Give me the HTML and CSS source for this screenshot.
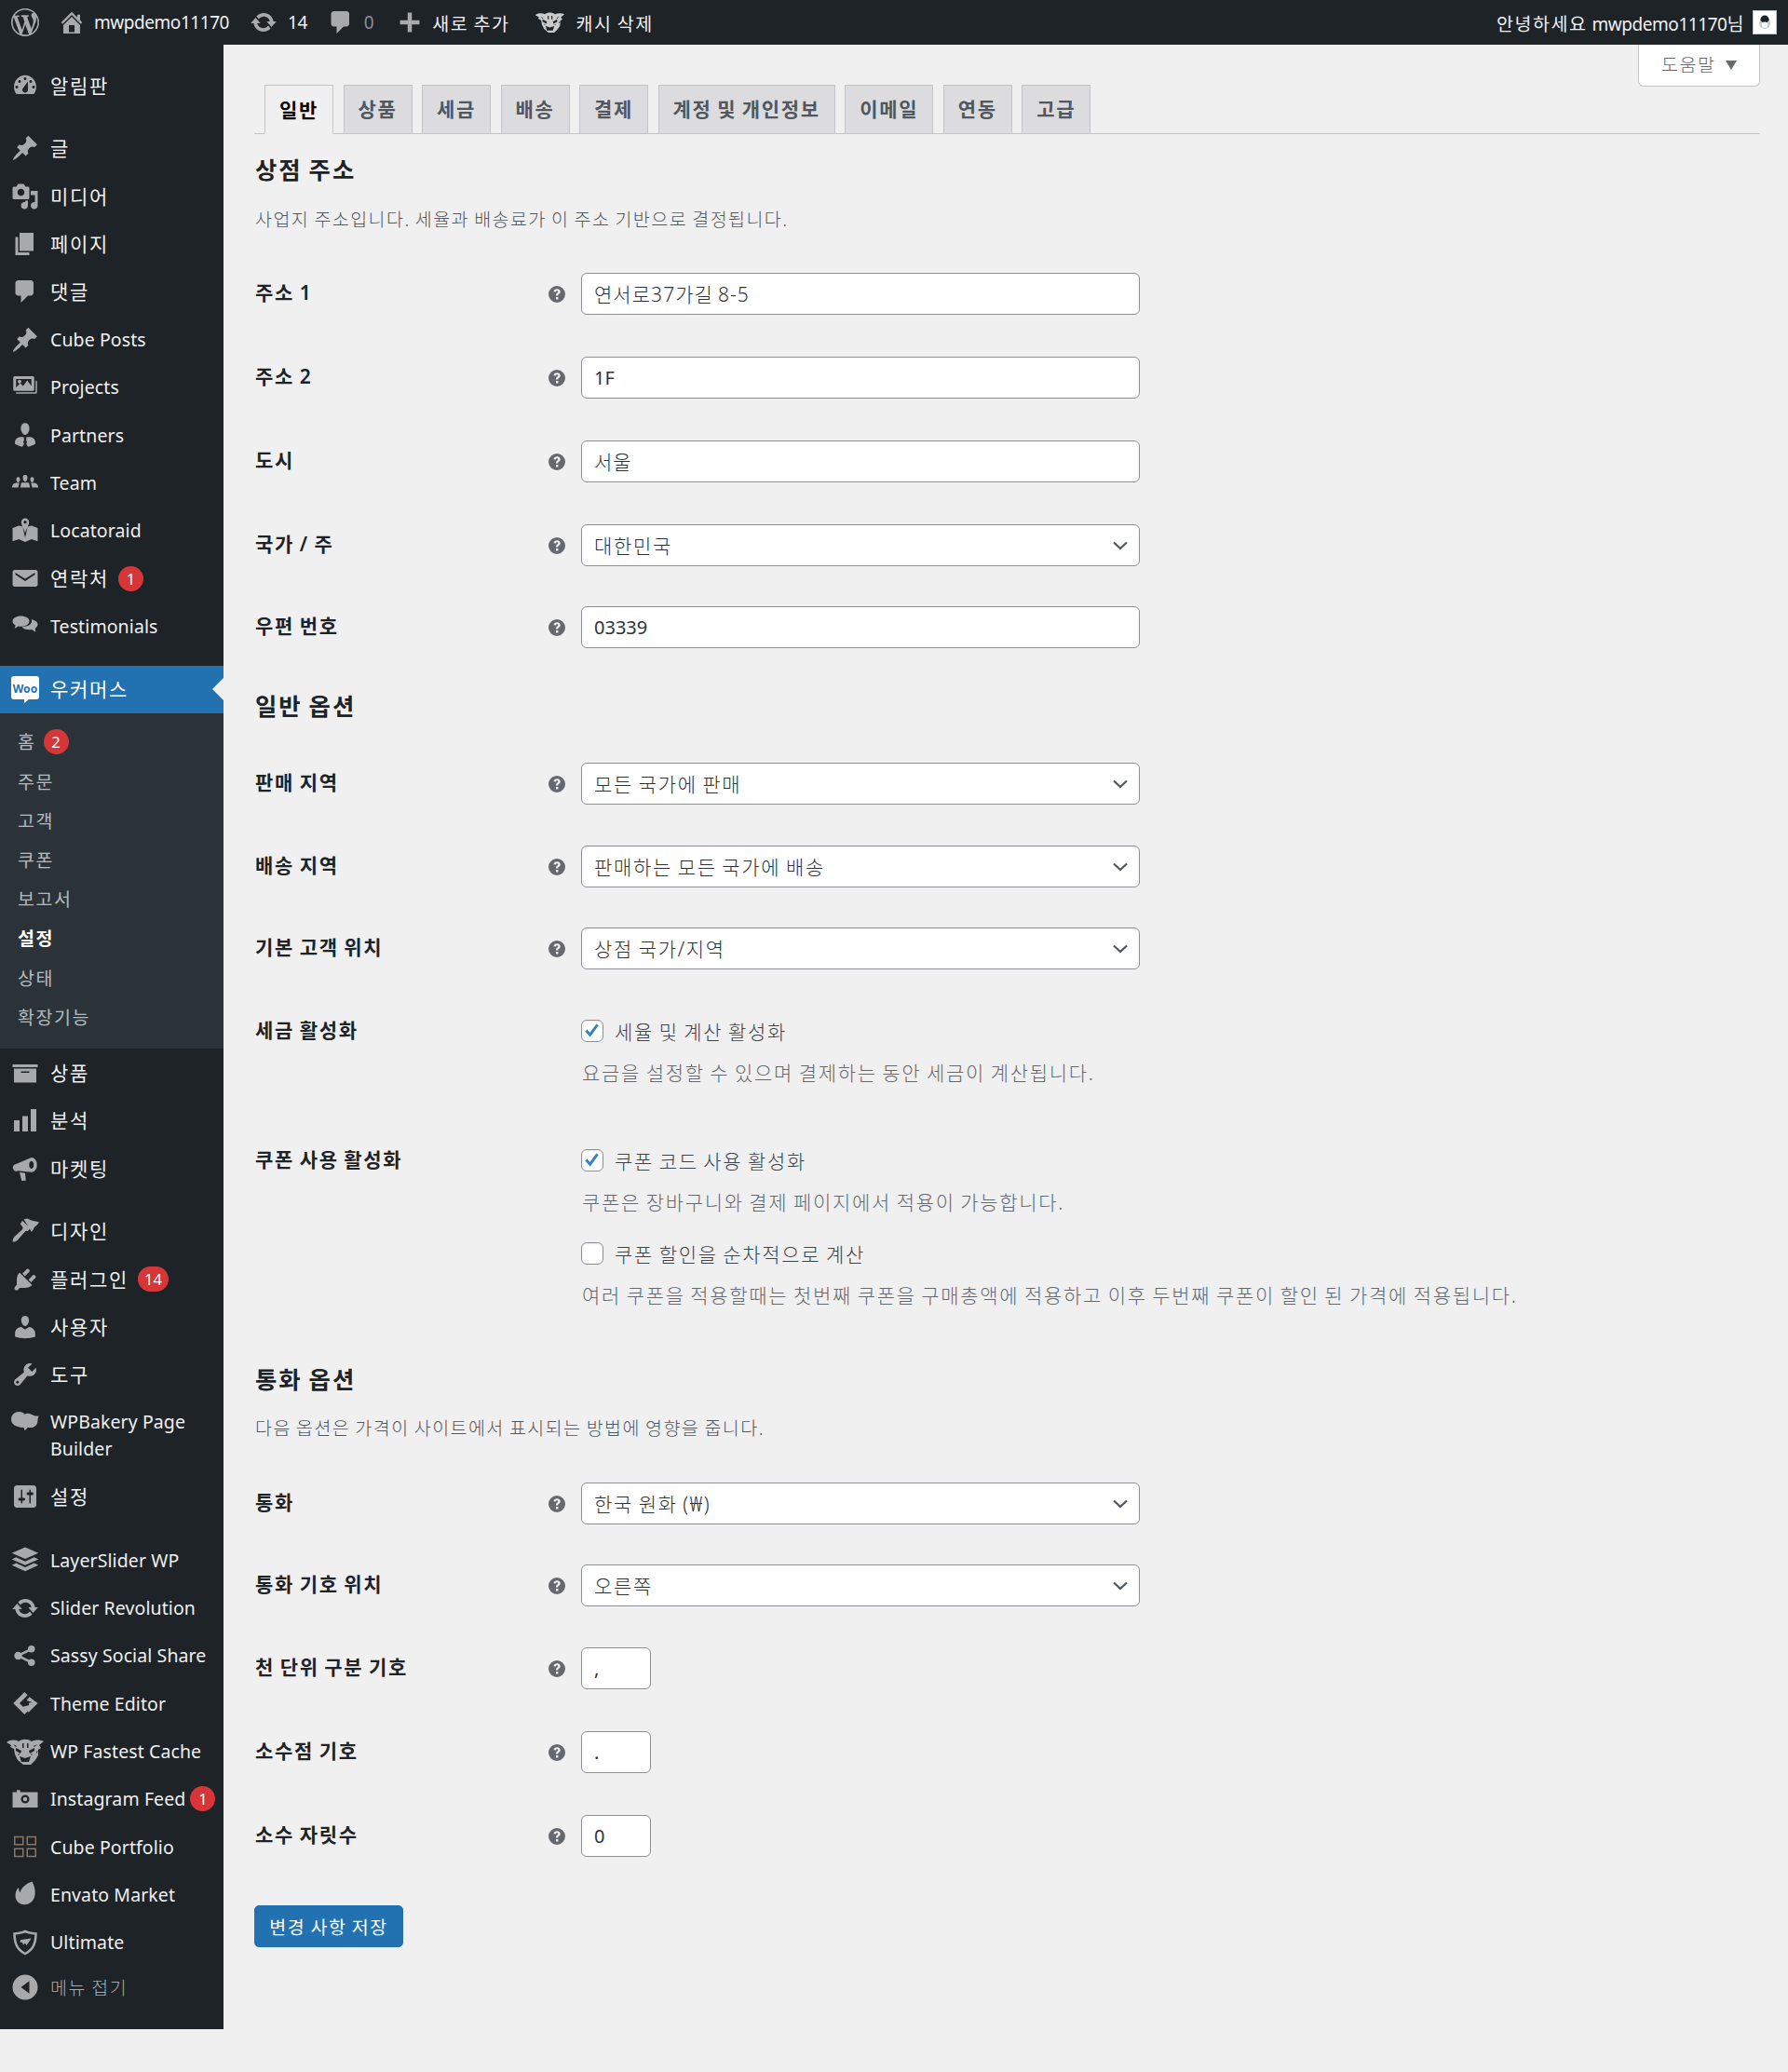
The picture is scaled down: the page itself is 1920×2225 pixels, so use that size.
FILE: index.html
```html
<!DOCTYPE html>
<html lang="ko">
<head>
<meta charset="utf-8">
<title>일반 설정</title>
<link rel="stylesheet" href="styles.css">
</head>
<body>
<svg class="defs" width="0" height="0" aria-hidden="true">
  <symbol id="i-wp" viewBox="0 0 20 20"><path d="M20 10c0-5.51-4.49-10-10-10C4.48 0 0 4.49 0 10c0 5.52 4.48 10 10 10 5.51 0 10-4.48 10-10zM7.78 15.37L4.37 6.22c.55-.02 1.17-.08 1.17-.08.5-.06.44-1.13-.06-1.11 0 0-1.45.11-2.37.11-.18 0-.37 0-.58-.01C4.12 2.69 6.89 1.04 10 1.04c2.33 0 4.45.87 6.05 2.34-.68-.11-1.65.39-1.65 1.58 0 .74.45 1.36.9 2.1.35.61.55 1.36.55 2.46 0 1.49-1.4 5-1.4 5l-3.03-8.37c.54-.02.82-.17.82-.17.5-.05.44-1.25-.06-1.22 0 0-1.44.12-2.38.12-.87 0-2.33-.12-2.33-.12-.5-.03-.56 1.2-.06 1.22l.92.08 1.26 3.41zM17.41 10c.24-.64.74-1.87.43-4.25.7 1.29 1.05 2.71 1.05 4.25 0 3.29-1.73 6.24-4.4 7.78.97-2.59 1.94-5.2 2.92-7.78zM6.1 18.09C3.12 16.65 1.11 13.53 1.11 10c0-1.3.23-2.48.72-3.59C3.25 10.3 4.67 14.2 6.1 18.09zm4.03-6.63l2.58 6.98c-.86.29-1.76.45-2.71.45-.79 0-1.57-.11-2.29-.33.81-2.38 1.62-4.73 2.42-7.1z"/></symbol>
  <symbol id="i-home" viewBox="0 0 20 20"><path d="M16 8.5l1.53 1.53-1.06 1.06L10 4.62l-6.47 6.47-1.06-1.06L10 2.5l4 4v-2h2v4zm-6-2.46l6 5.99V18H4v-5.97zM12 17v-5H8v5h4z"/></symbol>
  <symbol id="i-update" viewBox="0 0 20 20"><path d="M10.2 3.28c3.53 0 6.43 2.61 6.92 6h2.08l-3.5 4-3.5-4h2.32c-.45-1.97-2.21-3.45-4.32-3.45-1.45 0-2.73.71-3.54 1.78L4.95 5.66C6.23 4.2 8.11 3.28 10.2 3.28zm-.4 13.44c-3.52 0-6.43-2.61-6.92-6H.8l3.5-4c1.17 1.33 2.33 2.67 3.5 4H5.48c.45 1.97 2.21 3.45 4.32 3.45 1.45 0 2.73-.71 3.54-1.78l1.71 1.95c-1.28 1.46-3.15 2.38-5.25 2.38z"/></symbol>
  <symbol id="i-comment" viewBox="0 0 20 20"><path d="M5 2h9c1.1 0 2 .9 2 2v7c0 1.1-.9 2-2 2h-2l-5 5v-5H5c-1.1 0-2-.9-2-2V4c0-1.1.9-2 2-2z"/></symbol>
  <symbol id="i-plus" viewBox="0 0 20 20"><path d="M17 8.5v3h-5.5V17h-3v-5.5H3v-3h5.500V3h3v5.500z"/></symbol>
  <symbol id="i-cat" viewBox="0 0 42 30"><path d="M1 5c4-3 9-3 13-1 4-3 10-3 14 0 4-2 9-2 13 0l-5 4 2 3-3 2 0 6-3 5-5 5h-8l-6-5-3-6-1-6-4-2 1-2z"/><path class="cat-mark" fill-rule="evenodd" d="M11 11l6 3-1 3-5-3zM31 11l-6 3 1 3 5-3zM15 20l6 2 6-2-2 6h-8zM18 6h1.500v5H18zM23 6h1.500v5H23zM8 7l4 2-1 1zM34 7l-4 2 1 1zM7 14l2 1v2zM35 14l-2 1v2zM14 17l1 1-2 1zM28 17l-1 1 2 1z"/></symbol>
  <symbol id="i-dash" viewBox="0 0 20 20"><path fill-rule="evenodd" d="M3.76 16h12.48c1.1-1.43 1.76-3.21 1.76-5.14 0-4.62-3.58-8.36-8-8.36-4.42 0-8 3.74-8 8.36 0 1.93.66 3.71 1.76 5.14zM10 4c.55 0 1 .45 1 1s-.45 1-1 1-1-.45-1-1 .45-1 1-1zM6 6c.55 0 1 .45 1 1s-.45 1-1 1-1-.45-1-1 .45-1 1-1zm8 0c.55 0 1 .45 1 1s-.45 1-1 1-1-.45-1-1 .45-1 1-1zm-5.370 5.550L12 7v6c0 1.100-.9 2-2 2s-2-.9-2-2c0-.57.24-1.080.630-1.450zM4 10c.55 0 1 .45 1 1s-.45 1-1 1-1-.45-1-1 .45-1 1-1zm12 0c.55 0 1 .45 1 1s-.45 1-1 1-1-.45-1-1 .45-1 1-1z"/></symbol>
  <symbol id="i-pin" viewBox="0 0 20 20"><path d="M10.44 3.02l1.82-1.82 6.36 6.35-1.83 1.82c-1.05-.68-2.48-.57-3.41.36l-.75.75c-.92.93-1.04 2.35-.35 3.41l-1.83 1.82-2.41-2.41-2.8 2.79c-.42.42-3.38 2.71-3.8 2.29s1.86-3.39 2.28-3.81l2.79-2.79L4.100 9.360l1.83-1.82c1.05.69 2.48.57 3.4-.36l.75-.75c.93-.92 1.05-2.35.36-3.41z"/></symbol>
  <symbol id="i-media" viewBox="0 0 20 20"><path fill-rule="evenodd" d="M13 11V4c0-.55-.45-1-1-1h-1.670L9 1H5L3.670 3H2c-.55 0-1 .45-1 1v7c0 .55.45 1 1 1h10c.55 0 1-.45 1-1zM7 4.500c1.380 0 2.500 1.120 2.500 2.500S8.380 9.500 7 9.500 4.500 8.380 4.500 7 5.620 4.500 7 4.500zM14 6h5v10.500c0 1.380-1.120 2.500-2.500 2.500S14 17.880 14 16.500s1.120-2.500 2.500-2.500c.17 0 .34.020.5.050V9h-3V6zm-4 8.050V13h2v3.500c0 1.380-1.120 2.500-2.500 2.500S7 17.880 7 16.500 8.120 14 9.500 14c.17 0 .34.020.5.050z"/></symbol>
  <symbol id="i-page" viewBox="0 0 20 20"><path d="M6 15V2h10v13H6zm-1 1h8v2H3V5h2v11z"/></symbol>
  <symbol id="i-images" viewBox="0 0 20 20"><path fill-rule="evenodd" d="M2.500 2h13a1 1 0 0 1 1 1v8.500a1 1 0 0 1-1 1h-13a1 1 0 0 1-1-1V3a1 1 0 0 1 1-1zm1 2v6l3-3 2 2 3-4 3 4V4zm2.500 .5a1.300 1.300 0 1 0 0 2.600 1.300 1.300 0 0 0 0-2.600zM17.500 5v8.500H3.500v1h14a1 1 0 0 0 1-1V6a1 1 0 0 0-1-1z"/></symbol>
  <symbol id="i-partner" viewBox="0 0 20 20"><path fill-rule="evenodd" d="M10 10c-2.270 0-3-3.800-3-3.800C6.700 3.900 7.700 1.500 10 1.500s3.300 2.400 3 4.700c0 0-.73 3.800-3 3.800zM13.500 11.500c2.400.4 3.800 2 3.800 3.800v1.200s-2.800 1.500-5.300 2l-1.200-2 .5-1.500-.6-1.300.3-2.200zM6.500 11.500c-2.400.4-3.800 2-3.800 3.800v1.200s2.800 1.500 5.300 2l1.200-2-.5-1.500.6-1.300-.3-2.200z"/></symbol>
  <symbol id="i-team" viewBox="0 0 20 20"><path d="M10 4c1.400 0 1.800 1.200 1.600 2.300C11.400 7.700 10.900 8.800 10 8.800s-1.400-1.100-1.600-2.500C8.200 5.200 8.600 4 10 4zM7.300 9.500c1 0 1.800 0 2.700 0s1.700 0 2.700 0l.8 3.500H6.500zM5 5.500c1.100 0 1.400 1 1.300 1.900-.2 1.100-.5 1.900-1.300 1.900S3.900 8.500 3.700 7.400C3.600 6.500 3.900 5.500 5 5.500zM15 5.500c1.100 0 1.400 1 1.300 1.900-.2 1.100-.5 1.900-1.300 1.900s-1.100-.8-1.300-1.900c-.1-.9.200-1.900 1.300-1.900zM.5 13c.2-1.800 1.200-3.300 3.100-3.300h2.200L5 13zM19.500 13c-.2-1.800-1.200-3.300-3.100-3.300h-2.200L15 13z"/></symbol>
  <symbol id="i-map" viewBox="0 0 20 20"><path fill-rule="evenodd" d="M1 8l4.500-1.700 2.700.7L10 15l1.800-8 2.700-.7L19 8v9.500l-4.500-1.500-4.500 2-4.500-2L1 17.500zM10 1a2.800 2.800 0 0 1 2.800 2.800c0 1.800-1.700 4.500-2.800 7.700-1.100-3.200-2.800-5.900-2.800-7.700A2.800 2.800 0 0 1 10 1zm0 1.700a1.100 1.100 0 1 0 0 2.200 1.100 1.100 0 0 0 0-2.200z"/></symbol>
  <symbol id="i-mail" viewBox="0 0 20 20"><path fill-rule="evenodd" d="M2.500 4h15c.8 0 1.500.7 1.500 1.500v9c0 .8-.7 1.500-1.500 1.500h-15C1.700 16 1 15.300 1 14.500v-9C1 4.700 1.700 4 2.500 4zM3 6v1.300l7 4.700 7-4.700V6l-7 4.300z"/></symbol>
  <symbol id="i-testi" viewBox="0 0 20 20"><path d="M7 3c3.300 0 6 1.500 6 3.700 0 2.300-2.700 3.800-6 3.800-.7 0-1.300-.1-1.900-.2L2.500 12l.5-2.400C1.700 8.900 1 7.900 1 6.700 1 4.500 3.700 3 7 3z"/><path d="M14.500 5.500c2.500.4 4.500 1.700 4.500 3.500 0 1.100-.7 2.100-1.800 2.800l.3 2.700-2.800-1.800c-.5.100-1.100.2-1.700.2-2.500 0-4.700-.9-5.500-2.400 4.300.3 8-1.500 7-5z"/></symbol>
  <symbol id="i-archive" viewBox="0 0 20 20"><path fill-rule="evenodd" d="M19 4v2H1V4h18zM2 7h16v10H2V7zm11 3V9H7v1h6z"/></symbol>
  <symbol id="i-chart" viewBox="0 0 20 20"><path d="M18 18V2h-4v16h4zm-6 0V7H8v11h4zm-6 0v-8H2v8h4z"/></symbol>
  <symbol id="i-mega" viewBox="0 0 20 20"><path fill-rule="evenodd" d="M14.500 2a4 5.200 0 0 1 4 5.200 4 5.200 0 0 1-3.700 5.300L5 11.500a2.600 2.600 0 0 1-3.800-2.300A2.600 2.600 0 0 1 3.500 6.700zM14.500 4.500a2 2.800 0 0 0 0 5.500 2 2.800 0 0 0 0-5.500zM6 12.500l4 .6.500 5.400-3 .2z"/></symbol>
  <symbol id="i-brush" viewBox="0 0 20 20"><path d="M9 1.500l3-.5c1 1 3 1.500 4.500 1.800L20 3.500c-1 2-2.500 3-3.500 4l-1 2-1 1zM8 2.500l5.500 5.500-1.500 2c-1-.3-1.700 0-2.500.8L4.500 16.500c-1.200 1.200-3.500 1.500-3.500 1 0-1.200.5-2.700 1.500-3.700l5-4.500c.8-.8 1-1.700.5-2.700L6.500 5z"/></symbol>
  <symbol id="i-plugin" viewBox="0 0 20 20"><path d="M13.110 4.360L9.870 7.600 8 5.730l3.240-3.240c.35-.34 1.050-.2 1.560.32.52.51.66 1.210.31 1.550zm-8 1.770l.91-1.120 9.010 9.010-1.190.84c-.71.71-2.630 1.160-3.820 1.160H6.140L4.900 17.260c-.59.59-1.540.59-2.120 0-.59-.58-.59-1.530 0-2.120l1.240-1.240v-3.880c0-1.130.4-3.190 1.090-3.890zm7.260 3.970l3.240-3.240c.34-.35 1.040-.21 1.550.31.52.51.66 1.210.31 1.550l-3.240 3.250z"/></symbol>
  <symbol id="i-user" viewBox="0 0 20 20"><path d="M10 9.250c-2.270 0-2.730-3.440-2.730-3.440C7 4.020 7.820 2 9.970 2c2.160 0 2.980 2.020 2.710 3.810 0 0-.41 3.440-2.680 3.440zm0 2.570L12.720 10c2.390 0 4.520 2.330 4.520 4.530v2.490s-3.650 1.130-7.240 1.130c-3.650 0-7.240-1.130-7.240-1.130v-2.490c0-2.250 1.940-4.480 4.470-4.480z"/></symbol>
  <symbol id="i-tools" viewBox="0 0 20 20"><path fill-rule="evenodd" d="M16.680 9.770c-1.340 1.340-3.300 1.670-4.950.99l-5.410 6.520c-.99.99-2.590.99-3.580 0s-.99-2.590 0-3.570l6.520-5.420c-.68-1.650-.35-3.610.99-4.950 1.280-1.280 3.120-1.620 4.720-1.060l-2.890 2.890 2.820 2.820 2.860-2.870c.53 1.580.18 3.390-1.080 4.650zM3.810 16.210c.4.39 1.040.39 1.430 0 .4-.4.4-1.040 0-1.430-.39-.4-1.030-.4-1.430 0-.39.39-.39 1.030 0 1.430z"/></symbol>
  <symbol id="i-cloud" viewBox="0 0 20 20"><path d="M5.500 2c2 0 3.300.7 4.300 1.800C11 3 12.700 3 14 3.700c1.800.9 3.500 1.600 5.800 1.300-.6 1-.8 2-.8 3.200 0 2.300-1 4-3 4.800-1.200.5-2.700.5-4 .2l-2.200 2.300-1-2.300c-1 .2-2.300 0-3.800-.5C1.700 11.700-.2 9.700 0 7 .2 4 2.700 2 5.500 2z"/></symbol>
  <symbol id="i-sliders" viewBox="0 0 20 20"><path fill-rule="evenodd" d="M18 16V4c0-1.100-.9-2-2-2H4c-1.100 0-2 .9-2 2v12c0 1.100.9 2 2 2h12c1.100 0 2-.9 2-2zM8 11h1c.55 0 1 .45 1 1s-.45 1-1 1H8v1.500c0 .28-.22.5-.5.5s-.5-.22-.5-.5V13H6c-.55 0-1-.45-1-1s.45-1 1-1h1V5.500c0-.28.22-.5.5-.5s.5.22.5.5V11zm5-2h-1c-.55 0-1-.45-1-1s.45-1 1-1h1V5.500c0-.28.22-.5.5-.5s.5.22.5.5V7h1c.55 0 1 .45 1 1s-.45 1-1 1h-1v5.500c0 .28-.22.5-.5.5s-.5-.22-.5-.5V9z"/></symbol>
  <symbol id="i-layers" viewBox="0 0 20 20"><path d="M10 1l9.500 4.200-9.500 4.200L.5 5.200zM3.500 8.200L10 11.200l6.500-3 3 1.400-9.500 4.200L.5 9.600zM3.500 12.400L10 15.400l6.500-3 3 1.400L10 18.200.5 13.800z"/></symbol>
  <symbol id="i-share" viewBox="0 0 20 20"><circle cx="5" cy="10" r="2.800"/><circle cx="14.500" cy="5.200" r="2.500"/><circle cx="14.500" cy="14.800" r="2.500"/><path d="M5 9l9-4.500.8 1.500-9 4.500zM5.800 9.500l9 4.500-.8 1.500-9-4.500z"/></symbol>
  <symbol id="i-theme" viewBox="0 0 20 20"><path fill-rule="evenodd" d="M9.500 2l2.300 2.200L6 10l5.800 5.800L9.500 18l-8-8zM13 5.500l6 4.500-6.500 6.500L8.500 12.500l4-1 .5-2h2.500L11 8z"/></symbol>
  <symbol id="i-camera" viewBox="0 0 20 20"><path fill-rule="evenodd" d="M1 5h3V3.500h2.500V5H19v11H1zm9 2a3 3 0 1 0 0 6 3 3 0 0 0 0-6zm0 1.500a1.500 1.500 0 1 1 0 3 1.500 1.500 0 0 1 0-3z"/></symbol>
  <symbol id="i-cube" viewBox="0 0 20 20"><path fill="none" stroke="currentColor" stroke-width="1" d="M2.500 3h6v5.500h-6zM11.500 3h6v5.500h-6zM2.500 11.500h6V17h-6zM11.500 11.500h6V17h-6z"/></symbol>
  <symbol id="i-envato" viewBox="0 0 20 20"><path d="M15 1c1.500 3 2.500 6 2 9.500-.5 4-3.500 7-7.500 7S3 14.500 3 11c0-2.500 1.200-4.500 2.300-5.800.2 1.500.4 2.800 1.200 3.800C7 5.500 10.500 2.500 15 1z"/></symbol>
  <symbol id="i-shield" viewBox="0 0 20 20"><path fill-rule="evenodd" d="M10 1c2.800 1.200 5.500 1.800 8.500 1.800 0 6.500-1 12.500-8.500 16.200C2.500 15.300 1.500 9.300 1.500 2.800 4.500 2.800 7.200 2.200 10 1zm0 1.800C7.800 3.700 5.500 4.200 3.200 4.400c.2 5.100 1.300 9.800 6.800 12.700 5.500-2.900 6.600-7.600 6.800-12.700-2.300-.2-4.600-.7-6.800-1.600zM14.500 7l-3.500 5-1-1.500-1.500 1L8 10l-2-.5 1-1.500z"/></symbol>
  <symbol id="i-collapse" viewBox="0 0 20 20"><path fill-rule="evenodd" d="M10 1a9 9 0 1 1 0 18 9 9 0 0 1 0-18zm3 4.500L7 10l6 4.500z"/></symbol>
  <symbol id="i-help" viewBox="0 0 18 18"><path fill-rule="evenodd" d="M9 0a9 9 0 1 1 0 18A9 9 0 0 1 9 0zM9.200 3.200c-2 0-3.500 1-3.700 3l2.300.3c.1-.8.600-1.200 1.300-1.200s1.200.4 1.200 1c0 .500-.3.800-.9 1.200-1.100.8-1.400 1.500-1.400 2.900h2.200c0-.8.200-1.200 1-1.700 1-.7 1.500-1.400 1.500-2.500 0-1.900-1.500-3-3.500-3zM8 12v2.400h2.400V12z"/></symbol>
  <symbol id="i-chev" viewBox="0 0 16 10"><path fill="none" stroke="currentColor" stroke-width="2.200" d="M1 1.500l7 6.500 7-6.500"/></symbol>
  <symbol id="i-check" viewBox="0 0 16 16"><path fill="none" stroke="currentColor" stroke-width="3.200" d="M1.500 8l4.500 5L14.500 1.500"/></symbol>
</svg>

<header class="adminbar">
  <div class="bar-left">
    <svg class="bar-logo"><use href="#i-wp"/></svg>
    <span class="bar-item bar-site"><svg class="bar-ic"><use href="#i-home"/></svg><span class="bar-latin">mwpdemo11170</span></span>
    <span class="bar-item bar-updates"><svg class="bar-ic"><use href="#i-update"/></svg><span class="bar-latin">14</span></span>
    <span class="bar-item bar-comments"><svg class="bar-ic"><use href="#i-comment"/></svg><span class="muted bar-latin">0</span></span>
    <span class="bar-item bar-new"><svg class="bar-ic"><use href="#i-plus"/></svg><span class="ko">새로 추가</span></span>
    <span class="bar-item bar-cache"><svg class="bar-cat"><use href="#i-cat"/></svg><span class="ko">캐시 삭제</span></span>
  </div>
  <div class="bar-right">
    <span><span class="ko">안녕하세요</span> <span class="bar-latin">mwpdemo11170</span><span class="ko">님</span></span>
    <span class="avatar"><svg viewBox="0 0 26 26"><circle cx="13" cy="14" r="6.500" fill="#c9cbcb"/><path d="M8 10a5 5 0 0 1 10 0l-2 3h-6z" fill="#1d2327"/><circle cx="13" cy="16" r="3.500" fill="#fff"/></svg></span>
  </div>
</header>

<div class="layout">
  <aside class="sidebar">
    <nav class="menu">
      <a class="mi"><svg class="ic"><use href="#i-dash"/></svg><span class="ko">알림판</span></a>
      <div class="sep"></div>
      <a class="mi"><svg class="ic"><use href="#i-pin"/></svg><span class="ko">글</span></a>
      <a class="mi"><svg class="ic"><use href="#i-media"/></svg><span class="ko">미디어</span></a>
      <a class="mi"><svg class="ic"><use href="#i-page"/></svg><span class="ko">페이지</span></a>
      <a class="mi"><svg class="ic"><use href="#i-comment"/></svg><span class="ko">댓글</span></a>
      <a class="mi"><svg class="ic"><use href="#i-pin"/></svg><span>Cube Posts</span></a>
      <a class="mi"><svg class="ic"><use href="#i-images"/></svg><span>Projects</span></a>
      <a class="mi"><svg class="ic"><use href="#i-partner"/></svg><span>Partners</span></a>
      <a class="mi"><svg class="ic"><use href="#i-team"/></svg><span>Team</span></a>
      <a class="mi"><svg class="ic"><use href="#i-map"/></svg><span>Locatoraid</span></a>
      <a class="mi"><svg class="ic"><use href="#i-mail"/></svg><span class="ko">연락처</span><b class="badge">1</b></a>
      <a class="mi"><svg class="ic"><use href="#i-testi"/></svg><span>Testimonials</span></a>
      <div class="sep"></div>
      <a class="mi mi-active">
        <svg class="ic" viewBox="0 0 30 30"><path d="M3 1h24a3 3 0 0 1 3 3v19a3 3 0 0 1-3 3H19l-5 4v-4H3a3 3 0 0 1-3-3V4a3 3 0 0 1 3-3z" fill="#fff"/><text x="15" y="18.500" class="woo-text">Woo</text></svg>
        <span class="ko">우커머스</span>
      </a>
      <div class="submenu">
        <a class="si"><span class="ko">홈</span><b class="badge">2</b></a>
        <a class="si"><span class="ko">주문</span></a>
        <a class="si"><span class="ko">고객</span></a>
        <a class="si"><span class="ko">쿠폰</span></a>
        <a class="si"><span class="ko">보고서</span></a>
        <a class="si si-cur"><span class="ko">설정</span></a>
        <a class="si"><span class="ko">상태</span></a>
        <a class="si"><span class="ko">확장기능</span></a>
      </div>
      <a class="mi"><svg class="ic"><use href="#i-archive"/></svg><span class="ko">상품</span></a>
      <a class="mi"><svg class="ic"><use href="#i-chart"/></svg><span class="ko">분석</span></a>
      <a class="mi"><svg class="ic"><use href="#i-mega"/></svg><span class="ko">마켓팅</span></a>
      <div class="sep"></div>
      <a class="mi"><svg class="ic"><use href="#i-brush"/></svg><span class="ko">디자인</span></a>
      <a class="mi"><svg class="ic"><use href="#i-plugin"/></svg><span class="ko">플러그인</span><b class="badge badge-wide">14</b></a>
      <a class="mi"><svg class="ic"><use href="#i-user"/></svg><span class="ko">사용자</span></a>
      <a class="mi"><svg class="ic"><use href="#i-tools"/></svg><span class="ko">도구</span></a>
      <a class="mi mi-tall"><svg class="ic"><use href="#i-cloud"/></svg><span>WPBakery Page<br>Builder</span></a>
      <a class="mi"><svg class="ic"><use href="#i-sliders"/></svg><span class="ko">설정</span></a>
      <div class="sep sep-lg"></div>
      <a class="mi"><svg class="ic"><use href="#i-layers"/></svg><span>LayerSlider WP</span></a>
      <a class="mi"><svg class="ic"><use href="#i-update"/></svg><span>Slider Revolution</span></a>
      <a class="mi"><svg class="ic"><use href="#i-share"/></svg><span>Sassy Social Share</span></a>
      <a class="mi"><svg class="ic"><use href="#i-theme"/></svg><span>Theme Editor</span></a>
      <a class="mi"><svg class="ic ic-cat"><use href="#i-cat"/></svg><span>WP Fastest Cache</span></a>
      <a class="mi"><svg class="ic"><use href="#i-camera"/></svg><span>Instagram Feed</span><b class="badge badge-tight">1</b></a>
      <a class="mi"><svg class="ic ic-cube"><use href="#i-cube"/></svg><span>Cube Portfolio</span></a>
      <a class="mi"><svg class="ic"><use href="#i-envato"/></svg><span>Envato Market</span></a>
      <a class="mi"><svg class="ic"><use href="#i-shield"/></svg><span>Ultimate</span></a>
      <a class="mi mi-collapse"><svg class="ic"><use href="#i-collapse"/></svg><span class="ko">메뉴 접기</span></a>
    </nav>
  </aside>

  <main class="main">
    <a class="help-tab"><span class="ko">도움말</span><i class="help-arrow"></i></a>

    <div class="tabs">
      <a class="tab tab-on ko">일반</a>
      <a class="tab ko">상품</a>
      <a class="tab ko">세금</a>
      <a class="tab ko">배송</a>
      <a class="tab ko">결제</a>
      <a class="tab ko">계정 및 개인정보</a>
      <a class="tab ko">이메일</a>
      <a class="tab ko">연동</a>
      <a class="tab ko">고급</a>
    </div>

    <form class="form">
      <h2 class="title ko">상점 주소</h2>
      <p class="lead ko">사업지 주소입니다. 세율과 배송료가 이 주소 기반으로 결정됩니다.</p>

      <div class="rows rows-first">
        <div class="row"><div class="th"><label class="ko">주소 1</label><svg class="help"><use href="#i-help"/></svg></div><input class="field ko field-ko" type="text" value="연서로37가길 8-5"></div>
        <div class="row"><div class="th"><label class="ko">주소 2</label><svg class="help"><use href="#i-help"/></svg></div><input class="field" type="text" value="1F"></div>
        <div class="row"><div class="th"><label class="ko">도시</label><svg class="help"><use href="#i-help"/></svg></div><input class="field ko field-ko" type="text" value="서울"></div>
        <div class="row row-sel"><div class="th"><label class="ko">국가 / 주</label><svg class="help"><use href="#i-help"/></svg></div><div class="select"><span class="ko">대한민국</span><svg class="chev"><use href="#i-chev"/></svg></div></div>
        <div class="row"><div class="th"><label class="ko">우편 번호</label><svg class="help"><use href="#i-help"/></svg></div><input class="field" type="text" value="03339"></div>
      </div>

      <h2 class="title title-general ko">일반 옵션</h2>

      <div class="rows rows-general">
        <div class="row row-sel89"><div class="th"><label class="ko">판매 지역</label><svg class="help"><use href="#i-help"/></svg></div><div class="select"><span class="ko">모든 국가에 판매</span><svg class="chev"><use href="#i-chev"/></svg></div></div>
        <div class="row row-sel"><div class="th"><label class="ko">배송 지역</label><svg class="help"><use href="#i-help"/></svg></div><div class="select"><span class="ko">판매하는 모든 국가에 배송</span><svg class="chev"><use href="#i-chev"/></svg></div></div>
        <div class="row row-sel"><div class="th"><label class="ko">기본 고객 위치</label><svg class="help"><use href="#i-help"/></svg></div><div class="select"><span class="ko">상점 국가/지역</span><svg class="chev"><use href="#i-chev"/></svg></div></div>

        <div class="row row-check row-check-first">
          <div class="th th-check"><label class="ko">세금 활성화</label></div>
          <div class="checks">
            <div class="check"><span class="cb"><svg><use href="#i-check"/></svg></span><span class="ko">세율 및 계산 활성화</span></div>
            <p class="note ko">요금을 설정할 수 있으며 결제하는 동안 세금이 계산됩니다.</p>
          </div>
        </div>
        <div class="row row-check">
          <div class="th th-check"><label class="ko">쿠폰 사용 활성화</label></div>
          <div class="checks">
            <div class="check"><span class="cb"><svg><use href="#i-check"/></svg></span><span class="ko">쿠폰 코드 사용 활성화</span></div>
            <p class="note ko">쿠폰은 장바구니와 결제 페이지에서 적용이 가능합니다.</p>
            <div class="check check-next"><span class="cb"></span><span class="ko">쿠폰 할인을 순차적으로 계산</span></div>
            <p class="note note-wide ko">여러 쿠폰을 적용할때는 첫번째 쿠폰을 구매총액에 적용하고 이후 두번째 쿠폰이 할인 된 가격에 적용됩니다.</p>
          </div>
        </div>
      </div>

      <h2 class="title title-currency ko">통화 옵션</h2>
      <p class="lead ko">다음 옵션은 가격이 사이트에서 표시되는 방법에 영향을 줍니다.</p>

      <div class="rows rows-currency">
        <div class="row row-sel"><div class="th"><label class="ko">통화</label><svg class="help"><use href="#i-help"/></svg></div><div class="select"><span class="ko">한국 원화 (₩)</span><svg class="chev"><use href="#i-chev"/></svg></div></div>
        <div class="row row-sel89"><div class="th"><label class="ko">통화 기호 위치</label><svg class="help"><use href="#i-help"/></svg></div><div class="select"><span class="ko">오른쪽</span><svg class="chev"><use href="#i-chev"/></svg></div></div>
        <div class="row"><div class="th"><label class="ko">천 단위 구분 기호</label><svg class="help"><use href="#i-help"/></svg></div><input class="field field-small" type="text" value=","></div>
        <div class="row"><div class="th"><label class="ko">소수점 기호</label><svg class="help"><use href="#i-help"/></svg></div><input class="field field-small" type="text" value="."></div>
        <div class="row"><div class="th"><label class="ko">소수 자릿수</label><svg class="help"><use href="#i-help"/></svg></div><input class="field field-small" type="text" value="0"></div>
      </div>

      <button class="save ko" type="button">변경 사항 저장</button>
    </form>
  </main>
</div>
</body>
</html>
```

FILE: styles.css
```css
* { box-sizing: border-box; }
html, body { margin: 0; padding: 0; }
body {
  height: 2225px;
  overflow: hidden;
  background: #f0f0f1;
  color: #3c434a;
  font-family: "Noto Sans", "Noto Sans CJK KR", sans-serif;
  font-size: 19.5px;
}
a { color: inherit; text-decoration: none; }
svg { display: block; fill: currentColor; }
.defs { position: absolute; }

.ko { letter-spacing: .08em; word-spacing: -.07em; font-size: 21px; font-weight: 300; }

/* admin bar */
.adminbar {
  height: 48px;
  background: #1d2327;
  color: #f0f0f1;
  display: flex;
  justify-content: space-between;
  align-items: center;
  padding: 0 12px;
  font-size: 19.5px;
}
.adminbar .ko { font-size: 19.5px; font-weight: 400; }
.bar-latin { font-size: 19px; letter-spacing: -.45px; }
.bar-left, .bar-right, .bar-item { display: flex; align-items: center; }
.bar-logo { width: 30px; height: 30px; color: #a7aaad; }
.bar-ic { width: 30px; height: 30px; color: #a7aaad; margin-right: 9px; }
.bar-site { margin-left: 20px; }
.bar-updates { margin-left: 22px; }
.bar-updates .bar-ic { margin-right: 11px; }
.bar-comments { margin-left: 21px; }
.bar-comments .bar-ic { margin-right: 10px; }
.bar-new { margin-left: 24px; }
.bar-cache { margin-left: 26px; }
.bar-cat { width: 33px; height: 30px; color: #c9cbcc; margin-right: 12px; }
.cat-mark { fill: #1d2327; }
.muted { color: #8c8f94; }
.bar-right { gap: 8px; }
.avatar { width: 26px; height: 26px; background: #fff; border: 1px solid #c3c4c7; }

/* layout */
.layout { display: flex; align-items: flex-start; }
.sidebar {
  width: 240px;
  flex: none;
  background: #1d2327;
  padding: 18px 0 22.5px;
}
.menu { display: flex; flex-direction: column; }
.sep { height: 16.5px; }
.sep-lg { height: 17.5px; }
.mi {
  height: 51.3px;
  display: flex;
  align-items: center;
  padding-left: 12px;
  color: #f0f0f1;
  position: relative;
  white-space: nowrap;
  letter-spacing: .1px;
}
.mi .ko { padding-bottom: 2px; font-weight: 400; }
.ic { width: 30px; height: 30px; flex: none; margin-right: 12px; color: #a7aaad; }
.ic-cat { width: 42px; height: 30px; margin-left: -6px; margin-right: 6px; }
.ic-cube { color: #8a7766; }
.mi-tall { height: 79px; line-height: 29px; }
.mi-tall .ic { align-self: flex-start; margin-top: 11px; }
.mi-collapse { height: 45px; color: #a7aaad; }
.mi-collapse .ko { font-size: 19.5px; padding-bottom: 0; font-weight: 300; }
.mi-active { background: #2271b1; color: #fff; }
.mi-active::after {
  content: "";
  position: absolute;
  right: 0;
  top: 50%;
  margin-top: -12px;
  border: 12px solid transparent;
  border-right-color: #f0f0f1;
  border-left-width: 0;
}
.mi-active .ic { color: #fff; }
.woo-text { fill: #2271b1; font-size: 12px; font-weight: 700; text-anchor: middle; font-family: "Noto Sans", sans-serif; }
.badge {
  min-width: 27px;
  height: 27px;
  margin-left: 10px;
  padding: 0 7px;
  border-radius: 14px;
  background: #d63638;
  color: #fff;
  font-size: 16.5px;
  font-weight: 400;
  line-height: 27px;
  text-align: center;
  letter-spacing: 0;
}
.badge-wide { min-width: 33px; }
.badge-tight { margin-left: 5px; }
.submenu {
  background: #2c3338;
  padding: 10px 0 13px;
}
.si {
  height: 42.2px;
  display: flex;
  align-items: center;
  padding-left: 19px;
  color: rgba(240, 246, 252, .7);
}
.si .ko { font-size: 19.5px; padding-bottom: 2px; font-weight: 400; }
.si-cur { color: #fff; }
.si-cur .ko { font-weight: 700; }
.si .badge { margin-left: 8px; }

/* main */
.main {
  flex: 1;
  position: relative;
  padding: 43px 30px 0 33px;
  color: #3c434a;
}
.help-tab {
  position: absolute;
  top: 0;
  right: 30px;
  width: 131px;
  height: 45px;
  background: #fff;
  border: 1px solid #c3c4c7;
  border-top: 0;
  border-radius: 0 0 6px 6px;
  display: flex;
  align-items: center;
  padding-left: 24px;
  gap: 10px;
  color: #646970;
}
.help-tab .ko { font-size: 19.5px; padding-bottom: 3px; }
.help-arrow {
  width: 0;
  height: 0;
  border: 6.5px solid transparent;
  border-top: 10px solid #646970;
  border-bottom: 0;
}
.tabs {
  display: flex;
  gap: 10.5px;
  padding-left: 11px;
  border-bottom: 1.5px solid #c3c4c7;
  height: 53px;
}
.tab {
  height: 52.5px;
  padding: 0 15px 2px;
  display: flex;
  align-items: center;
  background: #dcdcde;
  border: 1.5px solid #c3c4c7;
  color: #50575e;
  font-weight: 600;
}
.tab-on {
  background: #f0f0f1;
  border-bottom-color: #f0f0f1;
  color: #000;
  height: 53px;
}

.title {
  margin: 22px 0 0;
  padding-left: 1px;
  height: 32px;
  line-height: 32px;
  font-size: 25.35px;
  font-weight: 700;
  color: #1d2327;
}
.lead {
  margin: 22px 0 0;
  padding-left: 1px;
  height: 30px;
  line-height: 32px;
  font-size: 19.5px;
  letter-spacing: .075em;
  color: #50575e;
}
.rows { display: flex; flex-direction: column; }
.rows-first { margin-top: 21px; }
.rows-general { margin-top: 23px; }
.rows-currency { margin-top: 22px; }
.title-general { margin-top: 23px; }
.title-currency { margin-top: 24px; }
.title-currency + .lead { margin-top: 21px; }

.row {
  display: flex;
  align-items: flex-start;
  padding: 22px 0 23px;
}
.row-sel { padding-bottom: 21px; }
.row-sel89 { padding-bottom: 22px; }
.row-check { padding: 33px 0 35px; }
.row-check-first { padding-bottom: 34px; }
.th {
  width: 351px;
  flex: none;
  height: 45px;
  padding-right: 17px;
  display: flex;
  align-items: center;
  justify-content: space-between;
}
.th-check { height: 24px; }
.th label {
  margin-left: 1px;
  font-weight: 600;
  color: #1d2327;
  padding-bottom: 3px;
  line-height: 28px;
}
.help { width: 18px; height: 18px; color: #646970; }
.field, .select {
  width: 600px;
  height: 45px;
  border: 1.5px solid #8c8f94;
  border-radius: 6px;
  background: #fff;
  color: #2c3338;
  font-family: "Noto Sans", "Noto Sans CJK KR", sans-serif;
  font-size: 20px;
  padding: 0 13px;
  outline: 0;
}
.field-ko { padding-bottom: 2px; font-size: 21px; letter-spacing: .05em; }
.field-small { width: 75px; }
.select {
  display: flex;
  align-items: center;
  justify-content: space-between;
}
.select .ko { padding-bottom: 2px; }
.chev { width: 16px; height: 10px; color: #50575e; margin-right: -1px; }
.checks { width: 1200px; }
.check { height: 24px; display: flex; align-items: center; gap: 12px; color: #3c434a; }
.cb {
  width: 24px;
  height: 24px;
  flex: none;
  background: #fff;
  border: 1.5px solid #8c8f94;
  border-radius: 6px;
  color: #3582c4;
  padding: 3px;
  box-shadow: inset 0 1px 2px rgba(0,0,0,.1);
}
.cb svg { width: 15px; height: 15px; }
.note {
  margin: 18px 0 0 1px;
  height: 30px;
  line-height: 30px;
  color: #646970;
  white-space: nowrap;
}
.check-next { margin-top: 28px; }
.save {
  display: block;
  margin-top: 29px;
  width: 160px;
  height: 45px;
  border: 1.5px solid #2271b1;
  border-radius: 5px;
  background: #2271b1;
  color: #fff;
  font-family: "Noto Sans", "Noto Sans CJK KR", sans-serif;
  font-size: 19.5px;
  font-weight: 400;
  padding: 0;
}
```
